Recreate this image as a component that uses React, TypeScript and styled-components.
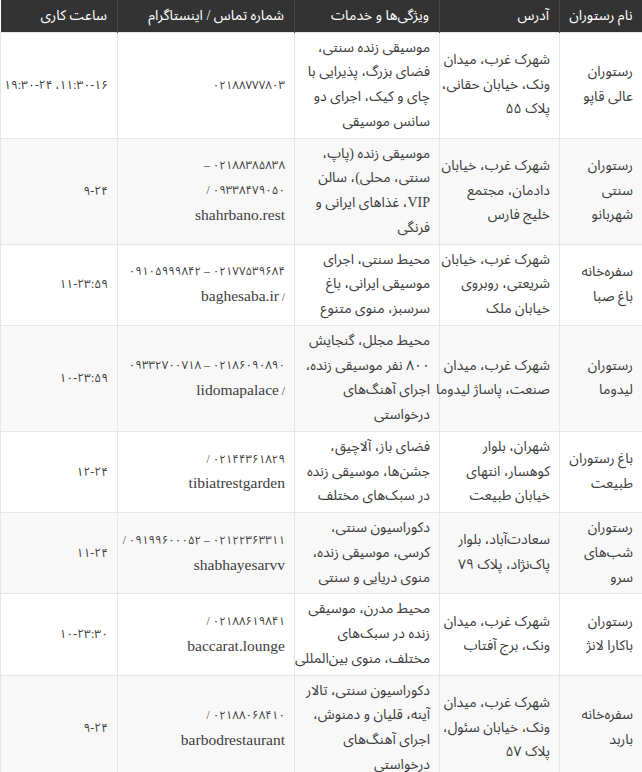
import React from "react";
import styled, { createGlobalStyle } from "styled-components";

const Global = createGlobalStyle`
  html, body { margin: 0; padding: 0; background: #ffffff; }
  body {
    font-family: "Liberation Serif", "Noto Sans Arabic", "Noto Naskh Arabic", "DejaVu Sans", serif;
  }
`;

const Table = styled.table`
  width: 642px;
  border-collapse: collapse;
  table-layout: fixed;
  direction: rtl;
  font-size: 14px;
  color: #3d3d3d;
`;

const HeadCell = styled.th`
  background: #333333;
  color: #ffffff;
  font-weight: normal;
  text-align: right;
  height: 32px;
  padding: 0 10px;
  box-sizing: border-box;
  border-left: 1px solid #474747;
  white-space: nowrap;
  &:last-child { border-left: none; }
`;

const Row = styled.tr<{ $alt: boolean }>`
  background: ${(p) => (p.$alt ? "#f8f8f8" : "#ffffff")};
`;

const Cell = styled.td<{ $kind?: "contact" | "hours" }>`
  border: 1px solid #e6e6e6;
  padding: 3px 9px 3px 9px;
  text-align: right;
  vertical-align: middle;
  line-height: 24.75px;
  white-space: nowrap;
  font-size: ${(p) => (p.$kind === "contact" ? "11.5px" : p.$kind === "hours" ? "12px" : "14px")};
  letter-spacing: ${(p) => (p.$kind === "contact" ? "-0.45px" : p.$kind === "hours" ? "-0.3px" : "0")};
`;

const Latin = styled.span<{ $big?: boolean }>`
  font-family: "Liberation Serif", serif;
  font-size: ${(p) => (p.$big ? "15.5px" : "inherit")};
  letter-spacing: 0;
`;

type Rest = {
  name: string[];
  address: string[];
  features: string[];
  contact: string[];
  hours: string;
};

const data: Rest[] = [
  {
    name: ["رستوران", "عالی قاپو"],
    address: ["شهرک غرب، میدان", "ونک، خیابان حقانی،", "پلاک ۵۵"],
    features: ["موسیقی زنده سنتی،", "فضای بزرگ، پذیرایی با", "چای و کیک، اجرای دو", "سانس موسیقی"],
    contact: ["۰۲۱۸۸۷۷۷۸۰۳"],
    hours: "۱۱:۳۰-۱۶، ۱۹:۳۰-۲۴",
  },
  {
    name: ["رستوران", "سنتی", "شهربانو"],
    address: ["شهرک غرب، خیابان", "دادمان، مجتمع", "خلیج فارس"],
    features: ["موسیقی زنده (پاپ،", "سنتی، محلی)، سالن", "VIP، غذاهای ایرانی و", "فرنگی"],
    contact: ["۰۲۱۸۸۳۸۵۸۳۸ –", "۰۹۳۳۸۴۷۹۰۵۰ /", "shahrbano.rest"],
    hours: "۹-۲۴",
  },
  {
    name: ["سفره‌خانه", "باغ صبا"],
    address: ["شهرک غرب، خیابان", "شریعتی، روبروی", "خیابان ملک"],
    features: ["محیط سنتی، اجرای", "موسیقی ایرانی، باغ", "سرسبز، منوی متنوع"],
    contact: ["۰۲۱۷۷۵۳۹۶۸۴ – ۰۹۱۰۵۹۹۹۸۴۲", "/ baghesaba.ir"],
    hours: "۱۱-۲۳:۵۹",
  },
  {
    name: ["رستوران", "لیدوما"],
    address: ["شهرک غرب، میدان", "صنعت، پاساژ لیدوما"],
    features: ["محیط مجلل، گنجایش", "۸۰۰ نفر موسیقی زنده،", "اجرای آهنگ‌های", "درخواستی"],
    contact: ["۰۲۱۸۶۰۹۰۸۹۰ – ۰۹۳۳۲۷۰۰۷۱۸", "/ lidomapalace"],
    hours: "۱۰-۲۳:۵۹",
  },
  {
    name: ["باغ رستوران", "طبیعت"],
    address: ["شهران، بلوار", "کوهسار، انتهای", "خیابان طبیعت"],
    features: ["فضای باز، آلاچیق،", "جشن‌ها، موسیقی زنده", "در سبک‌های مختلف"],
    contact: ["۰۲۱۴۴۳۶۱۸۲۹ /", "tibiatrestgarden"],
    hours: "۱۲-۲۴",
  },
  {
    name: ["رستوران", "شب‌های", "سرو"],
    address: ["سعادت‌آباد، بلوار", "پاک‌نژاد، پلاک ۷۹"],
    features: ["دکوراسیون سنتی،", "کرسی، موسیقی زنده،", "منوی دریایی و سنتی"],
    contact: ["۰۲۱۲۲۳۶۳۳۱۱ – ۰۹۱۹۹۶۰۰۰۵۲ /", "shabhayesarvv"],
    hours: "۱۱-۲۴",
  },
  {
    name: ["رستوران", "باکارا لانژ"],
    address: ["شهرک غرب، میدان", "ونک، برج آفتاب"],
    features: ["محیط مدرن، موسیقی", "زنده در سبک‌های", "مختلف، منوی بین‌المللی"],
    contact: ["۰۲۱۸۸۶۱۹۸۴۱ /", "baccarat.lounge"],
    hours: "۱۰-۲۳:۳۰",
  },
  {
    name: ["سفره‌خانه", "باربد"],
    address: ["شهرک غرب، میدان", "ونک، خیابان سئول،", "پلاک ۵۷"],
    features: ["دکوراسیون سنتی، تالار", "آینه، قلیان و دمنوش،", "اجرای آهنگ‌های", "درخواستی"],
    contact: ["۰۲۱۸۸۰۶۸۴۱۰ /", "barbodrestaurant"],
    hours: "۹-۲۴",
  },
];

const renderLine = (line: string, big: boolean) => {
  const parts = line.split(/([A-Za-z][A-Za-z.]*)/);
  return parts.map((p, i) =>
    /^[A-Za-z]/.test(p) ? (
      <Latin key={i} $big={big}>{p}</Latin>
    ) : (
      <React.Fragment key={i}>{p}</React.Fragment>
    )
  );
};

const Lines: React.FC<{ lines: string[]; big?: boolean }> = ({ lines, big = false }) => (
  <>
    {lines.map((l, i) => (
      <React.Fragment key={i}>
        {i > 0 && <br />}
        {renderLine(l, big)}
      </React.Fragment>
    ))}
  </>
);

export default function App() {
  return (
    <>
      <Global />
      <Table>
        <colgroup>
          <col style={{ width: 83 }} />
          <col style={{ width: 120 }} />
          <col style={{ width: 145 }} />
          <col style={{ width: 177 }} />
          <col style={{ width: 117 }} />
        </colgroup>
        <thead>
          <tr>
            <HeadCell>نام رستوران</HeadCell>
            <HeadCell>آدرس</HeadCell>
            <HeadCell>ویژگی‌ها و خدمات</HeadCell>
            <HeadCell>شماره تماس / اینستاگرام</HeadCell>
            <HeadCell>ساعت کاری</HeadCell>
          </tr>
        </thead>
        <tbody>
          {data.map((r, i) => (
            <Row key={i} $alt={i % 2 === 1}>
              <Cell><Lines lines={r.name} /></Cell>
              <Cell><Lines lines={r.address} /></Cell>
              <Cell><Lines lines={r.features} /></Cell>
              <Cell $kind="contact"><Lines lines={r.contact} big /></Cell>
              <Cell $kind="hours">{r.hours}</Cell>
            </Row>
          ))}
        </tbody>
      </Table>
    </>
  );
}
